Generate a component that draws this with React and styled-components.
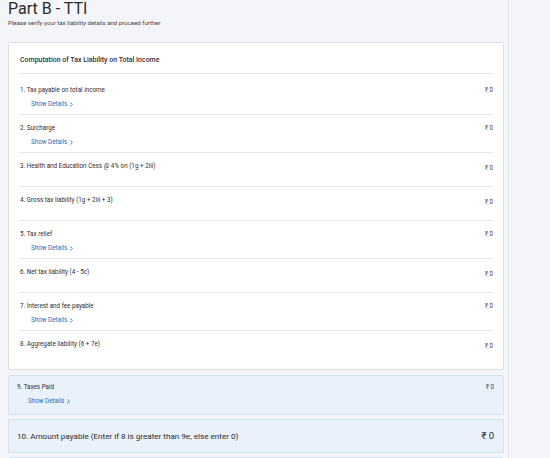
import React from "react";
import styled, { createGlobalStyle } from "styled-components";
import { ChevronRight } from "lucide-react";

const GlobalStyle = createGlobalStyle`
  body {
    margin: 0;
    background: #f3f5f9;
    font-family: Roboto, "Noto Sans", "DejaVu Sans", sans-serif;
    color: #333;
  }
`;

const Main = styled.div`
  width: 496px;
  padding: 0 4px 0 8px;
  border-right: 1px solid #e8ebf0;
  min-height: 458px;
`;

const Title = styled.h1`
  margin: 0;
  font-size: 16px;
  line-height: 18px;
  font-weight: 400;
  color: #2b2b2b;
`;

const Subtitle = styled.p`
  margin: 1px 0 0;
  font-size: 6.1px;
  line-height: 8px;
  color: #444;
`;

const Card = styled.div`
  margin-top: 15px;
  background: #fff;
  border: 1px solid #dde1e6;
  border-radius: 2px;
  padding: 0 10px 5px 10px;
`;

const CardHeader = styled.div`
  padding: 13px 0 9px 1px;
  font-size: 7px;
  line-height: 8px;
  font-weight: 500;
  color: #333;
  border-bottom: 1px solid #e6e8eb;
`;

const RowList = styled.div`
  padding-top: 3px;
`;

const Row = styled.div`
  display: flex;
  justify-content: space-between;
  align-items: flex-start;
  padding: 9px 0 ${(p) => (p.$details ? "6px" : "14px")} 1px;
  border-bottom: 1px solid #e6e8eb;

  &:last-child {
    border-bottom: none;
  }
`;

const Label = styled.div`
  font-size: 6.3px;
  line-height: 8px;
  color: #2e2e2e;
`;

const Value = styled.div`
  font-size: 6.3px;
  line-height: 8px;
  color: #444;
  margin-top: ${(p) => (p.$details ? "0" : "2px")};
  white-space: nowrap;
`;

const ShowDetails = styled.div`
  display: flex;
  align-items: center;
  gap: 1px;
  margin: 6px 0 0 11px;
  font-size: 6.3px;
  line-height: 8px;
  color: #2d6db5;
  cursor: pointer;
`;

const BlueBox = styled.div`
  margin-top: ${(p) => p.$gap || "4px"};
  background: #e9f1fb;
  border: 1px solid #d5e1ee;
  border-radius: 2px;
  display: flex;
  justify-content: space-between;
  align-items: ${(p) => (p.$big ? "center" : "flex-start")};
  padding: ${(p) => (p.$big ? "0 9px 0 8px" : "7px 9px 9px 8px")};
  min-height: ${(p) => (p.$big ? "32px" : "auto")};
`;

const BigText = styled.div`
  font-size: ${(p) => (p.$value ? "9.5px" : "8.1px")};
  line-height: 12px;
  color: #2b2b2b;
  white-space: nowrap;
`;

const rows = [
  { label: "1. Tax payable on total income", details: true },
  { label: "2. Surcharge", details: true },
  { label: "3. Health and Education Cess @ 4% on (1g + 2iii)" },
  { label: "4. Gross tax liability (1g + 2iii + 3)" },
  { label: "5. Tax relief", details: true },
  { label: "6. Net tax liability (4 - 5c)" },
  { label: "7. Interest and fee payable", details: true },
  { label: "8. Aggregate liability (6 + 7e)" },
];

function Details() {
  return (
    <ShowDetails>
      Show Details <ChevronRight size={7} strokeWidth={3} />
    </ShowDetails>
  );
}

export default function App() {
  return (
    <>
      <GlobalStyle />
      <Main>
        <Title>Part B - TTI</Title>
        <Subtitle>Please verify your tax liability details and proceed further</Subtitle>
        <Card>
          <CardHeader>Computation of Tax Liability on Total Income</CardHeader>
          <RowList>
            {rows.map((r) => (
              <Row key={r.label} $details={r.details}>
                <div>
                  <Label>{r.label}</Label>
                  {r.details && <Details />}
                </div>
                <Value $details={r.details}>₹ 0</Value>
              </Row>
            ))}
          </RowList>
        </Card>
        <BlueBox $gap="5px">
          <div>
            <Label>9. Taxes Paid</Label>
            <Details />
          </div>
          <Value $details>₹ 0</Value>
        </BlueBox>
        <BlueBox $big>
          <BigText>10. Amount payable (Enter if 8 is greater than 9e, else enter 0)</BigText>
          <BigText $value>₹ 0</BigText>
        </BlueBox>
        <BlueBox $big>
          <BigText>11. Refund (If 9e is greater than 8)</BigText>
          <BigText $value>₹ 0</BigText>
        </BlueBox>
      </Main>
    </>
  );
}
